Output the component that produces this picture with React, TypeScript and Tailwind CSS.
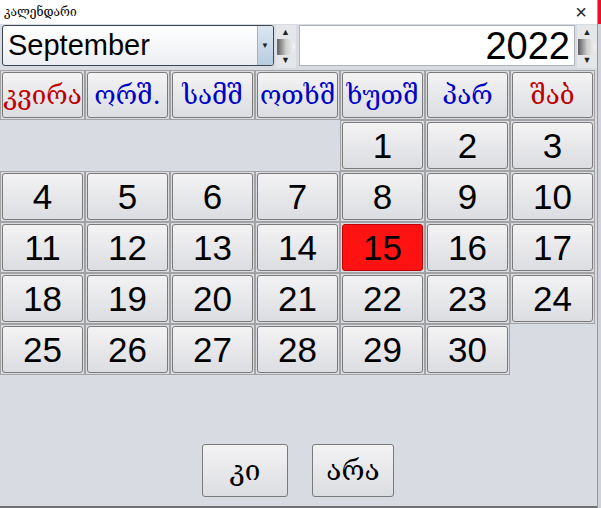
import React from 'react';

const headers = [
  { label: 'კვირა', red: true },
  { label: 'ორშ.', red: false },
  { label: 'სამშ', red: false },
  { label: 'ოთხშ', red: false },
  { label: 'ხუთშ', red: false },
  { label: 'პარ', red: false },
  { label: 'შაბ', red: true },
];

// September 2022 starts on Thursday
const days: (number | null)[] = [
  null, null, null, null, 1, 2, 3,
  4, 5, 6, 7, 8, 9, 10,
  11, 12, 13, 14, 15, 16, 17,
  18, 19, 20, 21, 22, 23, 24,
  25, 26, 27, 28, 29, 30, null,
];

const geo = '"DejaVu Serif", "DejaVu Sans", serif';

function Spinner() {
  return (
    <div className="flex h-[43px] w-[20px] flex-col items-center justify-between bg-[#e4e6ea] py-[3px]">
      <span className="text-[9px] leading-none text-[#222]">▲</span>
      <div className="h-[16px] w-[18px] rounded-r-full bg-gradient-to-r from-[#5e5e5e] via-[#cfcfcf] to-[#f4f4f4]" />
      <span className="text-[9px] leading-none text-[#222]">▼</span>
    </div>
  );
}

function Cell({ children, active }: { children?: React.ReactNode; active?: boolean }) {
  return (
    <div className="border border-[#a3a3a3] p-[1px]">
      <div
        className={
          active
            ? 'flex h-full items-center justify-center overflow-hidden rounded-[3px] border border-[#c00000] bg-[#ff1212]'
            : 'flex h-full items-center justify-center overflow-hidden rounded-[3px] border border-[#7a7a7a] bg-gradient-to-b from-[#f3f3f4] to-[#dcdde1]'
        }
      >
        {children}
      </div>
    </div>
  );
}

export default function App() {
  return (
    <div className="flex h-[508px] w-[601px] bg-[#d8dbe1]" style={{ fontFamily: '"Liberation Sans", Arial, sans-serif' }}>
      <div className="flex w-[597px] flex-col">
        {/* Title bar */}
        <div className="flex h-[24px] items-center justify-between bg-white pl-[4px] pr-[10px]">
          <span className="text-[12px] text-black" style={{ fontFamily: geo }}>კალენდარი</span>
          <span className="text-[20px] font-light leading-none text-[#222]">×</span>
        </div>

        {/* Month / year controls */}
        <div className="mt-[1px] flex h-[43px] items-start">
          <div className="ml-[2px] flex h-[41px] w-[273px] overflow-hidden rounded-[3px] border border-[#3c4650] bg-gradient-to-b from-white to-[#eceef2]">
            <div className="flex flex-1 items-center pl-[5px] text-[29px] leading-none text-black">September</div>
            <div className="flex w-[16px] items-center justify-center border-l border-[#9fb3c8] bg-gradient-to-b from-[#dbe6f1] to-[#b9cde0] text-[8px] text-[#222]">▼</div>
          </div>
          <div className="ml-[2px]">
            <Spinner />
          </div>
          <div className="ml-[3px] flex h-[41px] w-[278px] items-center justify-end border border-[#b0b4ba] bg-white pr-[4px] text-[38px] leading-none text-black">
            2022
          </div>
          <div className="ml-[2px]">
            <Spinner />
          </div>
        </div>

        {/* Calendar grid */}
        <div className="mt-[2px] grid w-[595px] grid-cols-[repeat(7,85px)] grid-rows-[50px_repeat(5,51px)]">
          {headers.map((h) => (
            <Cell key={h.label}>
              <span
                className={h.red ? 'whitespace-nowrap text-[26px] leading-none text-[#c00000]' : 'whitespace-nowrap text-[26px] leading-none text-[#0000c8]'}
                style={{ fontFamily: geo }}
              >
                {h.label}
              </span>
            </Cell>
          ))}
          {days.map((d, i) =>
            d === null ? (
              <div key={`e${i}`} />
            ) : (
              <Cell key={d} active={d === 15}>
                <span className="text-[35px] leading-none text-black">{d}</span>
              </Cell>
            )
          )}
        </div>

        {/* Buttons */}
        <div className="mt-auto mb-[9px] flex gap-[24px] pl-[202px]">
          <button className="flex h-[53px] w-[86px] items-center justify-center rounded-[3px] border border-[#7a7a7a] bg-gradient-to-b from-[#f3f3f4] to-[#dcdde1] text-[28px] text-black" style={{ fontFamily: geo }}>
            კი
          </button>
          <button className="flex h-[53px] w-[82px] items-center justify-center rounded-[3px] border border-[#7a7a7a] bg-gradient-to-b from-[#f3f3f4] to-[#dcdde1] text-[28px] text-black" style={{ fontFamily: geo }}>
            არა
          </button>
        </div>
        <div className="h-[2px] bg-[#6d6f73]" />
      </div>

      {/* Right edge of window behind */}
      <div className="flex w-[4px] flex-col border-l border-[#9a9a9a]">
        <div className="h-[24px] bg-[#e81123]" />
        <div className="flex-1 bg-[#cfd2d8]" />
      </div>
    </div>
  );
}
